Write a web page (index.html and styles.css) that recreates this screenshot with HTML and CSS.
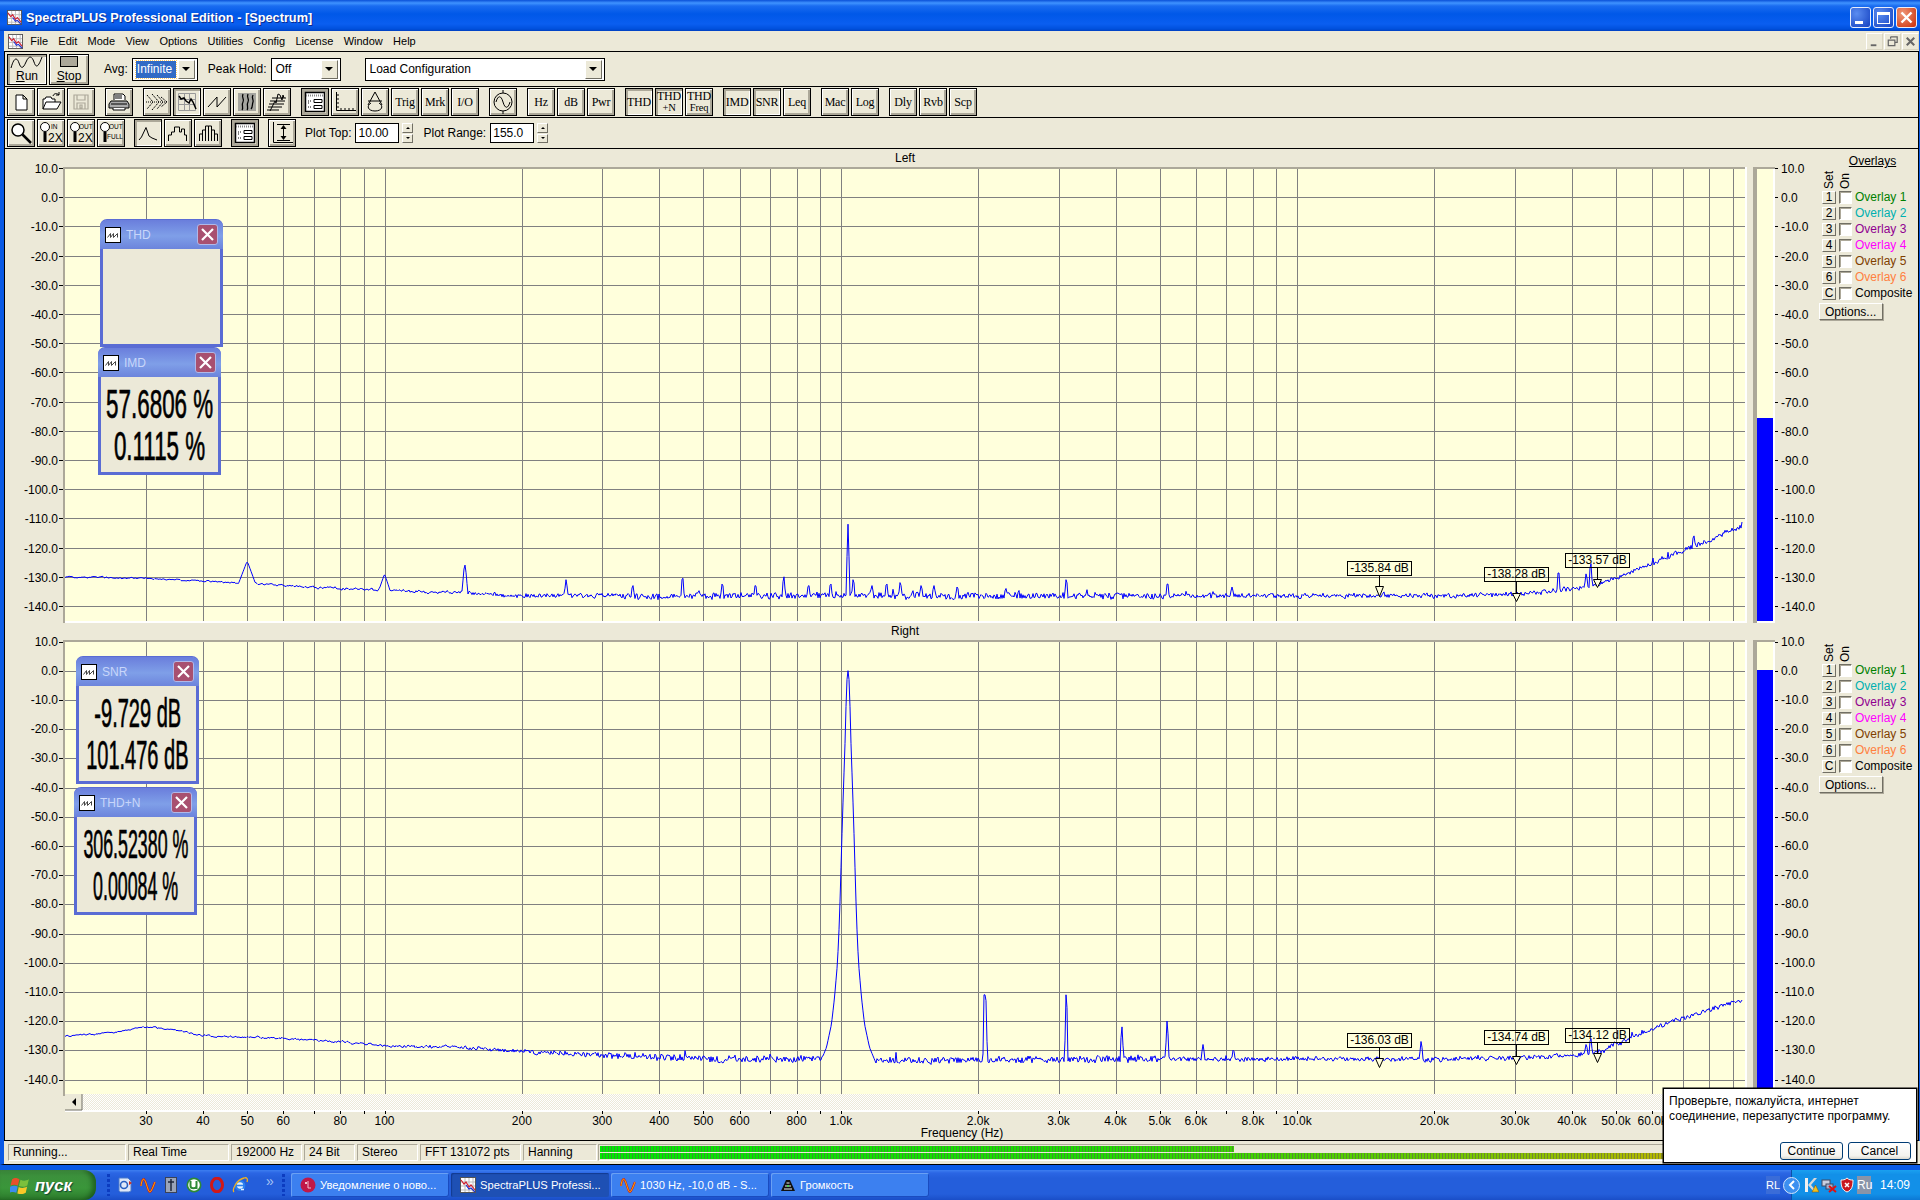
FILE: index.html
```html
<!DOCTYPE html>
<html lang="ru">
<head>
<meta charset="utf-8">
<title>SpectraPLUS Professional Edition - [Spectrum]</title>
<link rel="stylesheet" href="styles.css">
</head>
<body>
<div class="app">
  <div class="window">
    <header class="titlebar">
      <svg class="app-icon" viewBox="0 0 16 16"><rect x=".5" y=".5" width="15" height="15" fill="#fff" stroke="#555"/><path d="M1 5h14M1 9h14M1 13h14M5 1v14M9 1v14M13 1v14" stroke="#bbb"/><path d="M1 3l3 4 2-2 3 5 2-2 4 5" fill="none" stroke="#d02030" stroke-width="1.2"/><path d="M6 8l3 4 2-1 4 4" fill="none" stroke="#2030d0" stroke-width="1.2"/></svg>
      <span class="title-text">SpectraPLUS Professional Edition - [Spectrum]</span>
      <div class="caption-btns">
        <span class="cap cap-min"><i class="cap-min-bar"></i></span>
        <span class="cap cap-max"><i class="cap-max-box"></i></span>
        <span class="cap cap-close"><svg viewBox="0 0 13 13" class="cap-x"><path d="M1.5 1.5l10 10M11.5 1.5l-10 10" stroke="#fff" stroke-width="2.4"/></svg></span>
      </div>
    </header>

    <nav class="menubar">
      <svg class="menu-icon" viewBox="0 0 16 16"><rect x=".5" y=".5" width="15" height="15" fill="#fff" stroke="#555"/><path d="M1 5h14M1 9h14M1 13h14M5 1v14M9 1v14M13 1v14" stroke="#bbb"/><path d="M1 3l3 4 2-2 3 5 2-2 4 5" fill="none" stroke="#d02030" stroke-width="1.2"/><path d="M6 8l3 4 2-1 4 4" fill="none" stroke="#2030d0" stroke-width="1.2"/></svg>
      <span>File</span><span>Edit</span><span>Mode</span><span>View</span><span>Options</span><span>Utilities</span><span>Config</span><span>License</span><span>Window</span><span>Help</span>
      <div class="mdi-btns">
        <span class="mdi"><svg viewBox="0 0 16 16"><path d="M4 11h6v2H4z" fill="#666"/></svg></span>
        <span class="mdi"><svg viewBox="0 0 16 16"><path d="M6 3h7v6h-2M6 3v2M3.500 6.500h7v6h-7z" fill="none" stroke="#666" stroke-width="1.300"/></svg></span>
        <span class="mdi"><svg viewBox="0 0 16 16"><path d="M4 4l8 8M12 4l-8 8" stroke="#666" stroke-width="2.200"/></svg></span>
      </div>
    </nav>

    <div class="toolbars">
      <div class="toolbar toolbar-main">
        <button class="big-btn big-on">
          <svg class="big-ic" viewBox="0 0 34 14"><path d="M1 12C4 1 7 1 9 7s4 6 7-1 6-6 8 0 4 6 8-5" fill="none" stroke="#000"/></svg>
          <span class="big-label"><u>R</u>un</span>
        </button>
        <button class="big-btn">
          <i class="stop-sq"></i>
          <span class="big-label"><u>S</u>top</span>
        </button>
        <label class="tool-label lbl-avg">Avg:</label>
        <div class="combo combo-avg"><span class="combo-val combo-sel">Infinite</span><span class="combo-arrow"><i class="tri-down"></i></span></div>
        <label class="tool-label lbl-peak">Peak Hold:</label>
        <div class="combo combo-peak"><span class="combo-val">Off</span><span class="combo-arrow"><i class="tri-down"></i></span></div>
        <div class="combo combo-load"><span class="combo-val">Load Configuration</span><span class="combo-arrow"><i class="tri-down"></i></span></div>
      </div>

      <div class="toolbar">
        <button class="tb"><svg class="ic" viewBox="0 0 26 26"><path d="M8 6h7l4 4v11H8zM15 6v4h4" fill="#fff" stroke="#000"/></svg></button>
        <button class="tb"><svg class="ic" viewBox="0 0 26 26"><path d="M5 20V10h2l1-2h5l1 2h3v3M5 20l3-7h15l-4 7z" fill="#fff" stroke="#000"/><path d="M15 7c1-3 4-3 6-1M21 3v3h-3" fill="none" stroke="#000"/></svg></button>
        <button class="tb"><svg class="ic" viewBox="0 0 26 26"><path d="M6 6h14v14H6zM9 6v5h8V6M9 20v-6h8v6M12 16h2v3h-2z" fill="none" stroke="#aca899" stroke-width="1.200"/></svg></button>
        <button class="tb sep"><svg class="ic" viewBox="0 0 26 26"><path d="M8 11V5h9l2 2v4" fill="#fff" stroke="#000"/><path d="M5 12h16l2 3v4H3v-4z" fill="#aaa" stroke="#000"/><path d="M7 19v2h12v-2M5 15h16" stroke="#000" fill="#fff"/><path d="M9 7h7M9 9h7" stroke="#000"/></svg></button>
        <button class="tb sep"><svg class="ic" viewBox="0 0 26 26"><path d="M2 13h22" stroke="#000" stroke-dasharray="1 1"/><path d="M3 6l6 7-6 7M8 5l7 8-7 8M13 6l6 7-6 7M17 8l6 5-6 5" fill="none" stroke="#000" stroke-dasharray="1.500 .7"/></svg></button>
        <button class="tb tb-on"><svg class="ic" viewBox="0 0 26 26"><path d="M4.500 4.500h17v17h-17zM10.500 5v16M15.500 5v16M5 10.500h16M5 15.500h16" fill="none" stroke="#999"/><path d="M5 7l2 3 3-1 2 3 3 2 2-4 2 3 3 7" fill="none" stroke="#000" stroke-width="1.500"/></svg></button>
        <button class="tb"><svg class="ic" viewBox="0 0 26 26"><path d="M4 18L13 8v10l9-10" fill="none" stroke="#000"/></svg></button>
        <button class="tb tb-dither"><svg class="ic" viewBox="0 0 26 26"><path d="M4 4h18v18H4z" fill="#a6a6a0"/><path d="M9 5c-2 4 2 5 0 8s1 6-1 8M14 5c-2 4 2 5 0 8s1 6-1 8M19 6c-2 3 1 5 0 7s0 5-2 7" fill="none" stroke="#000" stroke-width="1.300"/></svg></button>
        <button class="tb"><svg class="ic" viewBox="0 0 26 26"><path d="M3 21h12M4 18h14M5 15h15M6 12h15M8 9h14" stroke="#000"/><path d="M6 22l3-6 2-4 1 2 2-9 2 1 2 5 1-5 1 3" fill="none" stroke="#000"/></svg></button>
        <button class="tb tb-on-dark sep"><svg class="ic" viewBox="0 0 26 26"><rect x="3.500" y="3.500" width="19" height="19" fill="#fff" stroke="#000" stroke-width="1.500"/><path d="M4 6.500h18" stroke="#888" stroke-width="2" stroke-dasharray="1 1"/><path d="M12 10.500h8v3h-8zM12 16.500h8v3h-8z" fill="#fff" stroke="#000"/><path d="M6 14h2M6 18h4M6 12h4" stroke="#000" stroke-dasharray="1 1"/></svg></button>
        <button class="tb"><svg class="ic" viewBox="0 0 26 26"><path d="M4.500 3v18.500H24" fill="none" stroke="#000"/><path d="M5 6h2M5 10h2M5 14h2M5 18h2M9 19v2M13 19v2M17 19v2M21 19v2" stroke="#000"/></svg></button>
        <button class="tb"><svg class="ic" viewBox="0 0 26 26"><path d="M13 3L6 16M13 3l7 13M6 12h14" fill="none" stroke="#000"/><path d="M9 14c-5 3-3 8 4 8s9-5 4-8" fill="none" stroke="#000"/></svg></button>
        <button class="tb tb-txt"><span>Trig</span></button>
        <button class="tb tb-txt"><span>Mrk</span></button>
        <button class="tb tb-txt"><span>I/O</span></button>
        <button class="tb sep"><svg class="ic" viewBox="0 0 26 26"><circle cx="13" cy="13" r="9" fill="none" stroke="#000"/><path d="M13 1v3M13 22v3" stroke="#000"/><path d="M6 13c2-7 5-7 7 0s5 7 7 0" fill="none" stroke="#000"/></svg></button>
        <button class="tb tb-txt sep"><span>Hz</span></button>
        <button class="tb tb-txt"><span>dB</span></button>
        <button class="tb tb-txt"><span>Pwr</span></button>
        <button class="tb tb-txt tb-on sep"><span>THD</span></button>
        <button class="tb tb-txt tb-on tb-two"><span>THD</span><span class="tb-sub">+N</span></button>
        <button class="tb tb-txt tb-two"><span>THD</span><span class="tb-sub">Freq</span></button>
        <button class="tb tb-txt tb-on sep"><span>IMD</span></button>
        <button class="tb tb-txt tb-on"><span>SNR</span></button>
        <button class="tb tb-txt"><span>Leq</span></button>
        <button class="tb tb-txt sep"><span>Mac</span></button>
        <button class="tb tb-txt"><span>Log</span></button>
        <button class="tb tb-txt sep"><span>Dly</span></button>
        <button class="tb tb-txt"><span>Rvb</span></button>
        <button class="tb tb-txt"><span>Scp</span></button>
      </div>

      <div class="toolbar">
        <button class="tb"><svg class="ic" viewBox="0 0 26 26"><circle cx="10" cy="10" r="6" fill="#fff" stroke="#000" stroke-width="1.500"/><path d="M14.500 14.500L23 23" stroke="#000" stroke-width="2.500"/></svg></button>
        <button class="tb"><svg class="ic" viewBox="0 0 26 26"><circle cx="7" cy="7" r="4.500" fill="#fff" stroke="#000"/><path d="M7 12v10" stroke="#000" stroke-width="3"/><text x="13" y="9" class="ic-small">IN</text><text x="10" y="22" class="ic-big">2X</text></svg></button>
        <button class="tb"><svg class="ic" viewBox="0 0 26 26"><circle cx="7" cy="7" r="4.500" fill="#fff" stroke="#000"/><path d="M7 12v10" stroke="#000" stroke-width="3"/><text x="11" y="9" class="ic-small">OUT</text><text x="10" y="22" class="ic-big">2X</text></svg></button>
        <button class="tb"><svg class="ic" viewBox="0 0 26 26"><circle cx="7" cy="7" r="4.500" fill="#fff" stroke="#000"/><path d="M7 12v10" stroke="#000" stroke-width="3"/><text x="11" y="9" class="ic-small">OUT</text><text x="9" y="19" class="ic-small">FULL</text></svg></button>
        <button class="tb tb-on sep-s"><svg class="ic" viewBox="0 0 26 26"><path d="M4 20l2.500-3L11 7.500 14 16l3 2 5 2" fill="none" stroke="#000"/></svg></button>
        <button class="tb"><svg class="ic" viewBox="0 0 26 26"><path d="M3.500 21v-6h3v-3h3V7h5v5h2v-3h3v6h2v6" fill="none" stroke="#000"/></svg></button>
        <button class="tb"><svg class="ic" viewBox="0 0 26 26"><path d="M4.500 21v-7h3v7M7.500 21V10h3v11M10.500 21V6h3v15M13.500 21V6h3v15M16.500 21V10h3v11M19.500 21v-7h3v7" fill="none" stroke="#000"/></svg></button>
        <button class="tb tb-on-dark sep-s"><svg class="ic" viewBox="0 0 26 26"><rect x="3.500" y="3.500" width="19" height="19" fill="#fff" stroke="#000" stroke-width="1.500"/><path d="M4 6.500h18" stroke="#888" stroke-width="2" stroke-dasharray="1 1"/><path d="M12 10.500h8v3h-8zM12 16.500h8v3h-8z" fill="#fff" stroke="#000"/><path d="M6 14h2M6 18h4M6 12h4" stroke="#000" stroke-dasharray="1 1"/></svg></button>
        <button class="tb sep-s"><svg class="ic" viewBox="0 0 26 26"><path d="M4.500 2v20.500H24M8 4.500h13M8 20.500h13M14.500 6v13" fill="none" stroke="#000"/><path d="M14.500 5l-3 4h6zM14.500 20l-3-4h6z" fill="#000"/></svg></button>
        <label class="tool-label lbl-top">Plot Top:</label>
        <div class="num-input">10.00</div>
        <div class="spin"><span class="spin-btn"><i class="tri-up"></i></span><span class="spin-btn"><i class="tri-down-s"></i></span></div>
        <label class="tool-label lbl-range">Plot Range:</label>
        <div class="num-input">155.0</div>
        <div class="spin"><span class="spin-btn"><i class="tri-up"></i></span><span class="spin-btn"><i class="tri-down-s"></i></span></div>
      </div>
    </div>

    <main class="client">
      <section class="pane pane-left">
        <div class="pane-main">
          <div class="pane-title pane-title-l">Left</div>
          <svg id="plot-left" class="plot plot-l" viewBox="5 167 1810 457"></svg>
        </div>
        <aside class="overlays ov-left">
          <div class="ov-title">Overlays</div>
          <div class="ov-head"><span class="rot">Set</span><span class="rot">On</span></div>
          <div class="ov-row"><button class="ov-set">1</button><i class="ov-check"></i><span class="c1">Overlay 1</span></div>
          <div class="ov-row"><button class="ov-set">2</button><i class="ov-check"></i><span class="c2">Overlay 2</span></div>
          <div class="ov-row"><button class="ov-set">3</button><i class="ov-check"></i><span class="c3">Overlay 3</span></div>
          <div class="ov-row"><button class="ov-set">4</button><i class="ov-check"></i><span class="c4">Overlay 4</span></div>
          <div class="ov-row"><button class="ov-set">5</button><i class="ov-check"></i><span class="c5">Overlay 5</span></div>
          <div class="ov-row"><button class="ov-set">6</button><i class="ov-check"></i><span class="c6">Overlay 6</span></div>
          <div class="ov-row"><button class="ov-set">C</button><i class="ov-check"></i><span>Composite</span></div>
          <button class="ov-options">Options...</button>
        </aside>
      </section>

      <section class="pane pane-right">
        <div class="pane-main">
          <div class="pane-title pane-title-r">Right</div>
          <svg id="plot-right" class="plot plot-r" viewBox="5 640 1810 500"></svg>
        </div>
        <aside class="overlays ov-right">
          <div class="ov-head"><span class="rot">Set</span><span class="rot">On</span></div>
          <div class="ov-row"><button class="ov-set">1</button><i class="ov-check"></i><span class="c1">Overlay 1</span></div>
          <div class="ov-row"><button class="ov-set">2</button><i class="ov-check"></i><span class="c2">Overlay 2</span></div>
          <div class="ov-row"><button class="ov-set">3</button><i class="ov-check"></i><span class="c3">Overlay 3</span></div>
          <div class="ov-row"><button class="ov-set">4</button><i class="ov-check"></i><span class="c4">Overlay 4</span></div>
          <div class="ov-row"><button class="ov-set">5</button><i class="ov-check"></i><span class="c5">Overlay 5</span></div>
          <div class="ov-row"><button class="ov-set">6</button><i class="ov-check"></i><span class="c6">Overlay 6</span></div>
          <div class="ov-row"><button class="ov-set">C</button><i class="ov-check"></i><span>Composite</span></div>
          <button class="ov-options">Options...</button>
        </aside>
      </section>

      <div class="float f-thd">
        <div class="float-title"><svg class="float-ic" viewBox="0 0 16 16"><rect x=".5" y=".5" width="15" height="15" fill="#fff" stroke="#000"/><path d="M2.500 10.500l3-4v4l3-4v4l4-4v4" fill="none" stroke="#444"/></svg><span>THD</span><span class="float-x"><svg viewBox="0 0 13 13"><path d="M1 1l11 11M12 1L1 12" stroke="#fff" stroke-width="2.200"/></svg></span></div>
        <div class="float-body"></div>
      </div>
      <div class="float f-imd">
        <div class="float-title"><svg class="float-ic" viewBox="0 0 16 16"><rect x=".5" y=".5" width="15" height="15" fill="#fff" stroke="#000"/><path d="M2.500 10.500l3-4v4l3-4v4l4-4v4" fill="none" stroke="#444"/></svg><span>IMD</span><span class="float-x"><svg viewBox="0 0 13 13"><path d="M1 1l11 11M12 1L1 12" stroke="#fff" stroke-width="2.200"/></svg></span></div>
        <div class="float-body"><span class="val sx-imd">57.6806 %</span><span class="val sx-imd">0.1115 %</span></div>
      </div>
      <div class="float f-snr">
        <div class="float-title"><svg class="float-ic" viewBox="0 0 16 16"><rect x=".5" y=".5" width="15" height="15" fill="#fff" stroke="#000"/><path d="M2.500 10.500l3-4v4l3-4v4l4-4v4" fill="none" stroke="#444"/></svg><span>SNR</span><span class="float-x"><svg viewBox="0 0 13 13"><path d="M1 1l11 11M12 1L1 12" stroke="#fff" stroke-width="2.200"/></svg></span></div>
        <div class="float-body"><span class="val sx-snr">-9.729 dB</span><span class="val sx-snr">101.476 dB</span></div>
      </div>
      <div class="float f-thdn">
        <div class="float-title"><svg class="float-ic" viewBox="0 0 16 16"><rect x=".5" y=".5" width="15" height="15" fill="#fff" stroke="#000"/><path d="M2.500 10.500l3-4v4l3-4v4l4-4v4" fill="none" stroke="#444"/></svg><span>THD+N</span><span class="float-x"><svg viewBox="0 0 13 13"><path d="M1 1l11 11M12 1L1 12" stroke="#fff" stroke-width="2.200"/></svg></span></div>
        <div class="float-body"><span class="val sx-thdn">306.52380 %</span><span class="val sx-thdn">0.00084 %</span></div>
      </div>
    </main>

    <footer class="statusbar">
      <span class="cell w-run">Running...</span>
      <span class="cell w-real">Real Time</span>
      <span class="cell w-hz">192000 Hz</span>
      <span class="cell w-bit">24 Bit</span>
      <span class="cell w-ste">Stereo</span>
      <span class="cell w-fft">FFT 131072 pts</span>
      <span class="cell w-han">Hanning</span>
      <div class="cell level">
        <div class="level-bar" style="width:634px"></div>
        <div class="level-bar" style="width:1200px"></div>
      </div>
    </footer>
  </div>

  <div class="taskbar">
    <button class="start">
      <svg class="flag" viewBox="0 0 20 20"><path d="M2 4c3-2 5-1 7 0l-1.500 6C5 9 3 9 .5 10z" fill="#e8502a"/><path d="M10 4.500c2 1 5 1.500 8-.5l-1.500 6c-3 2-6 1-8 .5z" fill="#7cc03c"/><path d="M.3 11c3-1 5-1 7 0L6 17c-2-1-4-1-7 0z" fill="#3c8cf0"/><path d="M8.300 11.500c2 1 5 1.500 8-.5L15 17c-3 2-6 1-8 .5z" fill="#f8c828"/></svg>
      <span>пуск</span>
    </button>
    <i class="grip grip-a"></i>
    <div class="quick">
      <svg class="tk-ic" viewBox="0 0 16 16"><path d="M2 1h9l3 3v10l-2 1H3l-1-1z" fill="#dfe8f8" stroke="#4a78c8"/><circle cx="7" cy="8" r="3.500" fill="none" stroke="#2860c0" stroke-width="1.600"/><path d="M12 4l3 2-3 2z" fill="#d03020"/></svg>
      <svg class="tk-ic" viewBox="0 0 16 16"><path d="M1 9C2 1 4 0 6 6s3 11 5 8 3-7 4-9" fill="none" stroke="#d01010" stroke-width="2"/><path d="M1 9C2 1 4 0 6 6s3 11 5 8 3-7 4-9" fill="none" stroke="#ffe000" stroke-width=".8"/></svg>
      <svg class="tk-ic" viewBox="0 0 16 16"><rect x="2.500" y=".5" width="11" height="15" fill="#9aa4b8" stroke="#3a4258"/><path d="M8 2v12M5 5h6" stroke="#20283c" stroke-width="1.500"/></svg>
      <svg class="tk-ic" viewBox="0 0 16 16"><circle cx="8" cy="8" r="7.500" fill="#2e8a36"/><circle cx="8" cy="8" r="5.800" fill="#fff"/><path d="M4.500 4v5c0 3 6 3 6 0V4M10.500 4v8" fill="none" stroke="#2e8a36" stroke-width="2"/></svg>
      <svg class="tk-ic" viewBox="0 0 16 16"><ellipse cx="8" cy="8" rx="5.500" ry="6.800" fill="none" stroke="#d01818" stroke-width="3"/></svg>
      <svg class="tk-ic" viewBox="0 0 16 16"><circle cx="8" cy="8.500" r="4.300" fill="#e4f2ff" stroke="#2a80f0" stroke-width="2.200"/><path d="M4 8.500h8" stroke="#2a80f0" stroke-width="1.600"/><path d="M12 12.500h-3" stroke="#e4f2ff" stroke-width="1.500"/><path d="M2 15C0 13 4 3 12 1c3-1 4 1 3 4" fill="none" stroke="#f0b020" stroke-width="1.300"/></svg>
    </div>
    <span class="chev">»</span>
    <i class="grip grip-b"></i>
    <div class="task"><svg class="tk-ic" viewBox="0 0 16 16"><circle cx="8" cy="8" r="7.500" fill="#c01848"/><circle cx="6" cy="6" r="1" fill="#fff"/><path d="M8 4v7h3" stroke="#f0c0d0" fill="none"/></svg><span>Уведомление о ново...</span></div>
    <div class="task task-active"><svg class="tk-ic" viewBox="0 0 16 16"><rect x=".5" y=".5" width="15" height="15" fill="#fff" stroke="#555"/><path d="M1 5h14M1 9h14M1 13h14M5 1v14M9 1v14M13 1v14" stroke="#bbb"/><path d="M1 3l3 4 2-2 3 5 2-2 4 5" fill="none" stroke="#d02030" stroke-width="1.200"/><path d="M6 8l3 4 2-1 4 4" fill="none" stroke="#2030d0" stroke-width="1.200"/></svg><span>SpectraPLUS Professi...</span></div>
    <div class="task"><svg class="tk-ic" viewBox="0 0 16 16"><path d="M1 9C2 1 4 0 6 6s3 11 5 8 3-7 4-9" fill="none" stroke="#d01010" stroke-width="2"/><path d="M1 9C2 1 4 0 6 6s3 11 5 8 3-7 4-9" fill="none" stroke="#ffe000" stroke-width=".8"/></svg><span>1030 Hz, -10,0 dB - S...</span></div>
    <div class="task"><svg class="tk-ic" viewBox="0 0 16 16"><path d="M1 14L6 3h4l5 11z" fill="#111"/><path d="M4 12h8M5 9h6M6.500 6h3" stroke="#f0f0f0"/><rect x="7" y="8" width="2" height="2" fill="#50d050"/></svg><span>Громкость</span></div>
    <div class="tray-wrap">
      <span class="lang-rl">RL</span>
      <span class="tray-chev"><svg viewBox="0 0 10 10"><path d="M7 1L3 5l4 4" fill="none" stroke="#fff" stroke-width="2"/></svg></span>
      <div class="tray">
        <svg class="tk-ic" viewBox="0 0 16 16"><path d="M2 1v14h3V1z" fill="#f0f0f0"/><path d="M5 8l6-7h3L8 8l6 7h-3z" fill="#d8d8d8"/><path d="M9 15l3.500-7 3.500 7z" fill="#f0c020" stroke="#805000" stroke-width=".5"/></svg>
        <svg class="tk-ic" viewBox="0 0 16 16"><rect x="1" y="3" width="8" height="6" fill="#c8d0e0" stroke="#404860"/><rect x="5" y="7" width="7" height="5" fill="#a0b0d0" stroke="#404860"/><path d="M8 9l7 6M15 9l-7 6" stroke="#e01010" stroke-width="2"/></svg>
        <svg class="tk-ic" viewBox="0 0 16 16"><path d="M8 1c2 2 4 2 6 2 0 6-1 10-6 12C3 13 2 9 2 3c2 0 4 0 6-2z" fill="#c81820" stroke="#f4f4f4"/><path d="M6 6l4 4M10 6l-4 4" stroke="#fff" stroke-width="1.500"/></svg>
        <span class="lang-ru">Ru</span>
        <span class="clock">14:09</span>
      </div>
    </div>
  </div>

  <div class="notice">
    <p>Проверьте, пожалуйста, интернет<br>соединение, перезапустите программу.</p>
    <div class="notice-btns"><button class="xp-btn">Continue</button><button class="xp-btn">Cancel</button></div>
  </div>
</div>
<script src="chart.js"></script>
</body>
</html>
```
FILE: styles.css
```css
* { box-sizing: border-box; }
html, body { margin: 0; padding: 0; width: 1920px; height: 1200px; overflow: hidden; }
body { font: 12px "Liberation Sans", Arial, sans-serif; color: #000; background: #245edb; }
button { font: inherit; color: inherit; margin: 0; padding: 0; }
.app { position: relative; width: 1920px; height: 1200px; display: flex; flex-direction: column; }

.window { height: 1170px; display: flex; flex-direction: column; padding: 0 1px 4px 4px; background: #0a5ae6; }
.titlebar { height: 31px; margin: 0 -1px 0 -4px; padding: 4px 0 0 7px; display: flex; align-items: center; color: #fff;
  background: linear-gradient(180deg, #0a50d8 0, #3f93ff 3px, #1a6cf0 6px, #0058e8 14px, #0a5ef0 24px, #0050dc 29px, #0040c0 31px); }
.app-icon { width: 15px; height: 15px; margin-right: 4px; }
.title-text { font-weight: bold; font-size: 12.750px; text-shadow: 1px 1px 0 #0a2a90; }
.caption-btns { margin-left: auto; margin-right: 3px; display: flex; gap: 2px; }
.cap { width: 21px; height: 21px; border: 1px solid #e8eefc; border-radius: 3px; display: flex; background: radial-gradient(circle at 30% 30%, #5a8cf0, #1e4cc8 85%); position: relative; }
.cap-min-bar { width: 8px; height: 3px; background: #fff; margin: auto 0 3px 4px; }
.cap-max-box { width: 13px; height: 12px; border: 1px solid #fff; border-top-width: 3px; margin: auto; }
.cap-close { background: radial-gradient(circle at 30% 30%, #f09878, #d03c18 85%); }
.cap-x { width: 13px; height: 13px; margin: auto; }

.menubar { height: 20px; display: flex; align-items: center; gap: 10.300px; background: #ece9d8; font-size: 11px; padding-left: 4px; }
.menu-icon { width: 15px; height: 15px; margin-right: -3px; }
.mdi-btns { margin-left: auto; display: flex; gap: 1px; }
.mdi { width: 17px; height: 17px; background: #ece9d8; border: 1px solid #fff; border-right-color: #d8d4c0; border-bottom-color: #d8d4c0; display: flex; }
.mdi svg { width: 15px; height: 15px; }

.toolbars { display: flex; flex-direction: column; background: #ece9d8; border-left: 1px solid #000; border-right: 1px solid #000; }
.toolbar { height: 31px; border-top: 1px solid #000; display: flex; align-items: center; padding-left: 2px; gap: 2px; }
.toolbar-main { height: 35px; }
.tool-label { font-size: 12px; white-space: nowrap; }
.lbl-avg { margin-left: 13px; margin-right: 2px; }
.lbl-peak { margin-left: 8px; margin-right: 2px; }
.lbl-top { margin-left: 7px; }
.lbl-range { margin-left: 8px; }

.big-btn { width: 40px; height: 31px; border: 1px solid #000; background: #ece9d8; box-shadow: inset 1px 1px 0 #fff, inset -2px -2px 0 #aca899; display: flex; flex-direction: column; align-items: center; justify-content: flex-end; padding-bottom: 1px; font-size: 12px; line-height: 13px; }
.big-on { box-shadow: inset 2px 2px 0 #aca899, inset -1px -1px 0 #fff; }
.big-ic { width: 34px; height: 14px; }
.stop-sq { width: 18px; height: 11px; background: #aca899; border: 1px solid #000; margin-bottom: 3px; }
.combo { height: 23px; background: #fff; border: 1px solid #000; display: flex; align-items: center; padding: 0 2px 0 3px; font-size: 12px; }
.combo-avg { width: 66px; }
.combo-peak { width: 70px; }
.combo-load { width: 240px; margin-left: 22px; }
.combo-val { flex: 1; padding-left: 1px; }
.combo-sel { background: #316ac5; color: #fff; outline: 1px dotted #fc6; height: 17px; line-height: 17px; margin-right: 2px; }
.combo-arrow { width: 17px; height: 19px; background: #ece9d8; border: 1px solid #fff; border-right-color: #716f64; border-bottom-color: #716f64; display: flex; }
.tri-down { margin: auto; width: 0; height: 0; border: 4px solid transparent; border-top-color: #000; border-bottom-width: 0; }

.tb { width: 28px; height: 28px; flex: none; border: 1px solid #000; background: #ece9d8; box-shadow: inset 1px 1px 0 #fff, inset -2px -2px 0 #aca899; display: flex; flex-direction: column; align-items: center; justify-content: center; }
.tb-on { box-shadow: inset 2px 2px 0 #aca899, inset -1px -1px 0 #fff; }
.tb-on-dark { box-shadow: inset 3px 3px 0 #aca899, inset -2px -2px 0 #aca899; }
.sep { margin-left: 8px; }
.sep-s { margin-left: 7px; }
.ic { width: 26px; height: 26px; display: block; }
.ic-small { font: 6.500px "Liberation Sans", Arial, sans-serif; }
.ic-big { font: 12px "Liberation Sans", Arial, sans-serif; }
.tb-txt { font: 12px "Liberation Serif", "Times New Roman", serif; letter-spacing: -.2px; }
.tb-two { line-height: 11px; }
.tb-sub { font-size: 10.500px; }
.num-input { width: 44px; height: 20px; background: #fff; border: 1px solid #000; font-size: 12px; line-height: 18px; padding-left: 2px; margin-left: 2px; }
.spin { width: 11px; display: flex; flex-direction: column; gap: 1px; height: 20px; margin-left: 1px; }
.spin-btn { flex: 1; background: #ece9d8; border: 1px solid #fff; border-right-color: #716f64; border-bottom-color: #716f64; display: flex; }
.tri-up { margin: auto; width: 0; height: 0; border: 2px solid transparent; border-bottom-color: #000; border-top-width: 0; }
.tri-down-s { margin: auto; width: 0; height: 0; border: 2px solid transparent; border-top-color: #000; border-bottom-width: 0; }

.client { position: relative; height: 993px; background: #ece9d8; border: 1px solid #000; border-bottom-width: 1px; display: flex; flex-direction: column; overflow: hidden; }
.pane { display: flex; }
.pane-main { width: 1810px; flex: none; }
.pane-title { text-align: center; padding-right: 10px; font-size: 12px; }
.pane-title-l { height: 18px; line-height: 19px; }
.pane-title-r { height: 16px; line-height: 15px; }
.plot { display: block; width: 1810px; overflow: visible; font-family: "Liberation Sans", Arial, sans-serif; font-size: 12px; }
.plot-l { height: 457px; }
.plot-r { height: 500px; }

.overlays { flex: 1; padding-left: 7px; display: flex; flex-direction: column; font-size: 12px; }
.ov-left { padding-top: 5px; }
.ov-right { padding-top: 18px; }
.ov-title { text-decoration: underline; width: 100px; text-align: center; margin-left: 0; height: 15px; line-height: 14px; padding-left: 1px; }
.ov-head { height: 20px; display: flex; gap: 2px; }
.rot { writing-mode: vertical-rl; transform: rotate(180deg); width: 14px; line-height: 14px; text-align: left; }
.ov-row { height: 16px; display: flex; align-items: center; gap: 3px; white-space: nowrap; }
.ov-set { width: 14px; height: 13px; flex: none; border: 1px solid #fff; border-right-color: #716f64; border-bottom-color: #716f64; background: #ece9d8; font-size: 12px; line-height: 11px; }
.ov-check { width: 13px; height: 13px; flex: none; background: #fff; border: 1px solid #716f64; border-right-color: #fff; border-bottom-color: #fff; box-shadow: inset 1px 1px 0 #aca899; }
.c1 { color: #008000; } .c2 { color: #00b0b0; } .c3 { color: #900090; } .c4 { color: #ff00ff; } .c5 { color: #804000; } .c6 { color: #ff8040; }
.ov-options { width: 64px; height: 17px; margin: 2px 0 0 -3px; background: #ece9d8; border: 1px solid #fff; border-right-color: #716f64; border-bottom-color: #716f64; box-shadow: 1px 1px 0 #aca899; font-size: 12px; line-height: 14px; text-align: left; padding-left: 5px; }

.float { position: absolute; width: 123px; height: 128px; display: flex; flex-direction: column; border: 3px solid #5a6cd4; border-top-width: 1px; border-radius: 7px 7px 0 0; background: #ece9d8; }
.f-thd { left: 95px; top: 70px; }
.f-imd { left: 93px; top: 198px; }
.f-snr { left: 71px; top: 507px; }
.f-thdn { left: 69px; top: 638px; }
.float-title { height: 29px; flex: none; margin: 0 -3px; padding: 0 5px; display: flex; align-items: center; gap: 5px; color: #c8d6fa; font-size: 12px; background: linear-gradient(180deg, #6a7edc, #7f9fe8 55%, #6c84dc); border-radius: 6px 6px 0 0; }
.float-ic { width: 16px; height: 16px; flex: none; }
.float-x { margin-left: auto; width: 21px; height: 21px; border: 1px solid #b0b8e8; border-radius: 3px; background: #a85070; display: flex; }
.float-x svg { width: 13px; height: 13px; margin: auto; }
.float-body { flex: 1; display: flex; flex-direction: column; align-items: center; justify-content: center; overflow: hidden; }
.val { display: block; font-size: 40px; line-height: 42px; white-space: nowrap; transform-origin: center; flex: none; -webkit-text-stroke: .7px #000; }
.sx-imd { transform: scaleX(.56); }
.sx-snr { transform: scaleX(.5); }
.sx-thdn { transform: scaleX(.445); }

.statusbar { height: 24px; flex: none; margin: 0 -1px 0 -4px; padding: 3px 0 3px 4px; display: flex; gap: 2px; background: #ece9d8; border-bottom: 1px solid #000; font-size: 12px; border-left: 4px solid #0a5ae6; }
.cell { height: 17px; border: 1px solid #aca899; border-right-color: #fff; border-bottom-color: #fff; line-height: 15px; padding-left: 4px; white-space: nowrap; }
.w-run { width: 118px; } .w-real { width: 101px; } .w-hz { width: 71px; } .w-bit { width: 51px; } .w-ste { width: 61px; } .w-fft { width: 101px; } .w-han { width: 74px; }
.level { flex: 1; padding: 1px 0 0 1px; margin-right: 4px; margin-left: -1px; display: flex; flex-direction: column; gap: 1px; }
.level-bar { height: 6px; background: repeating-linear-gradient(90deg, rgba(0,0,0,0) 0 2px, rgba(90,90,90,.55) 2px 3px), linear-gradient(90deg, #00ea00 0, #20dc00 500px, #60cc00 800px, #c0b400 1100px, #d0a800 1320px); background-size: 3px 100%, 1320px 100%; background-repeat: repeat, no-repeat; }

.taskbar { height: 30px; flex: none; display: flex; align-items: center; color: #fff; background: linear-gradient(180deg, #3d7ef0 0, #2b66e4 3px, #245edb 8px, #245edb 24px, #1a4ec8 30px); }
.start { width: 96px; height: 30px; flex: none; display: flex; align-items: center; gap: 4px; padding-left: 10px; border: 0; border-radius: 0 12px 12px 0; color: #fff; background: linear-gradient(180deg, #4a9a4a 0, #3c8f3c 10%, #3a963a 60%, #2c7c2c 100%); box-shadow: inset -4px 0 5px rgba(0,40,0,.45); font: italic bold 16.500px "Liberation Sans", Arial, sans-serif; text-shadow: 1px 1px 1px #143; }
.flag { width: 21px; height: 21px; }
.grip { width: 3px; height: 22px; flex: none; background: repeating-linear-gradient(180deg, #0c3cc0 0 3px, transparent 3px 5px); }
.grip-a { margin-left: 11px; }
.quick { display: flex; gap: 7px; margin-left: 7px; }
.tk-ic { width: 16px; height: 16px; flex: none; display: block; }
.chev { margin-left: 18px; width: 13px; color: #a8c4f4; font-size: 14px; line-height: 14px; margin-top: -8px; }
.grip-b { margin-left: 3px; margin-right: 6px; }
.task { width: 158px; height: 24px; flex: none; margin-right: 2px; display: flex; align-items: center; gap: 4px; padding-left: 9px; border-radius: 2px; background: #3c80f0; box-shadow: inset 1px 1px 0 #6aa0f4, inset -1px -1px 0 #1a4cc0; font-size: 11.200px; white-space: nowrap; overflow: hidden; }
.task-active { background: #1e50b4; box-shadow: inset 1px 1px 1px #123a90; }
.tray-wrap { margin-left: auto; display: flex; align-items: center; height: 30px; }
.lang-rl { width: 14px; height: 18px; line-height: 18px; text-align: center; background: #3a6cd8; font-size: 11px; margin-right: 3px; }
.tray-chev { width: 17px; height: 17px; border-radius: 50%; background: #3c90f0; border: 1px solid #d4e4fc; display: flex; margin-right: -9px; position: relative; }
.tray-chev svg { width: 10px; height: 10px; margin: auto; }
.tray { width: 129px; height: 30px; display: flex; align-items: center; gap: 2px; padding-left: 11px; background: linear-gradient(180deg, #1aa0f0 0, #1290e8 15%, #1290e8 80%, #0c78d4 100%); border-left: 1px solid #0c50a8; }
.lang-ru { width: 14px; height: 18px; line-height: 18px; background: #8a94a8; text-align: center; font-size: 12px; }
.clock { margin-left: 7px; font-size: 12px; }

.notice { position: absolute; left: 1663px; top: 1088px; width: 254px; height: 75px; background: #fff; border: 1px solid #000; padding: 5px 5px 0 5px; box-shadow: 0 0 0 .5px #000; display: flex; flex-direction: column; }
.notice p { margin: 0; font-size: 12px; letter-spacing: .05px; line-height: 15px; white-space: nowrap; }
.notice-btns { margin-top: auto; margin-bottom: 2px; display: flex; justify-content: flex-end; gap: 5px; }
.xp-btn { width: 63px; height: 18px; border: 1px solid #003c74; border-radius: 3px; background: linear-gradient(180deg, #fff, #f4f3ee 80%, #dcd8ce); font-size: 12px; line-height: 14px; }
```
FILE: chart.js
```js
(function () {
  var X0 = 384.5, DEC = 456.3;
  function fx(f) { return X0 + DEC * Math.log10(f / 100); }
  function xf(x) { return 100 * Math.pow(10, (x - X0) / DEC); }
  var seed = 12345;
  function rnd() { seed = (seed * 1664525 + 1013904223) % 4294967296; return seed / 4294967296; }

  function interp(tab, f) {
    var lf = Math.log10(f);
    if (f <= tab[0][0]) return tab[0][1];
    for (var i = 1; i < tab.length; i++) {
      if (f <= tab[i][0]) {
        var a = Math.log10(tab[i - 1][0]), b = Math.log10(tab[i][0]);
        return tab[i - 1][1] + (tab[i][1] - tab[i - 1][1]) * (lf - a) / (b - a);
      }
    }
    return tab[tab.length - 1][1];
  }

  var GRID = [];
  [10, 100, 1000, 10000].forEach(function (d) {
    for (var k = 1; k < 10; k++) { var f = d * k; if (f >= 30 && f <= 90000) GRID.push(f); }
  });

  function trace(cfg) {
    var pts = [];
    var drift = 0;
    for (var x = 65; x <= 1742; x++) {
      var f = xf(x);
      var base = interp(cfg.floor, f);
      var amp = Math.min(1.3, Math.max(0.1, f / 260));
      if (f > 5000) amp = 0.9;
      drift = drift * 0.6 + (rnd() - 0.5) * 0.5;
      var v = base + drift + (rnd() - 0.5) * amp * 1.6;
      if (rnd() < 0.03 && f > 200) v += rnd() * 1.8 * amp;
      cfg.peaks.forEach(function (p) {
        var dx = Math.max(0, Math.abs(x - fx(p[0])) - 0.5);
        var w = p[2] || 1.1;
        if (dx < w) {
          var h = p[1] - (p[1] - base) * dx / w;
          if (h > v) v = h;
        }
      });
      if (cfg.skirt) {
        var d = Math.max(0, Math.abs(x - fx(cfg.skirt)) - 0.5);
        var S = [[0, 0], [1, -6], [2.5, -25], [5, -50], [8, -85], [10, -100], [13, -112], [16, -121], [21, -129], [27, -134]];
        for (var i = 1; i < S.length; i++) {
          if (d <= S[i][0]) {
            var val = S[i - 1][1] + (S[i][1] - S[i - 1][1]) * (d - S[i - 1][0]) / (S[i][0] - S[i - 1][0]);
            if (val > v) v = val;
            break;
          }
        }
      }
      pts.push(x + "," + (cfg.y0 + (10 - v) * 2.92).toFixed(1));
    }
    return pts.join(" ");
  }

  function marker(m) {
    var cx = m[1] + 32.5, s = "";
    s += '<rect x="' + (m[1] + .5) + '" y="' + (m[2] + .5) + '" width="64" height="14" fill="none" stroke="#000"/>';
    s += '<text x="' + cx + '" y="' + (m[2] + 11) + '" text-anchor="middle" font-size="12">' + m[0] + "</text>";
    var c = Math.floor(cx) + .5;
    s += '<path d="M' + c + " " + (m[2] + 14) + "V" + m[3] + '" stroke="#000"/>';
    s += '<path d="M' + (c - 4) + " " + (m[3] + .5) + "h8l-4 " + (m[4] - m[3]) + 'z" fill="#ffffdc" stroke="#000"/>';
    return s;
  }

  function plot(id, cfg) {
    var s = "", top = cfg.top, bot = cfg.bot;
    /* sunken plot frame */
    s += '<rect x="63" y="' + (top - 2) + '" width="1684" height="' + (bot - top + 4) + '" fill="#fff"/>';
    s += '<path d="M63 ' + (top - 2) + "H1745V" + top + "H65V" + (bot + 2) + 'H63z" fill="#aca899"/>';
    s += '<rect x="65" y="' + top + '" width="1680" height="' + (bot - top) + '" fill="#ffffdc"/>';
    /* grid */
    var g = "";
    GRID.forEach(function (f) { var x = Math.round(fx(f)) + .5; g += "M" + x + " " + top + "V" + bot; });
    for (var db = 0; db >= -140; db -= 10) {
      var y = Math.round(cfg.y0 + (10 - db) * 2.92) + .5;
      g += "M65 " + y + "H1745";
    }
    s += '<path d="' + g + '" stroke="#808080" fill="none" shape-rendering="crispEdges"/>';
    /* dB scale + ticks, on both sides */
    for (db = 10; db >= -140; db -= 10) {
      var yy = Math.round(cfg.y0 + (10 - db) * 2.92);
      var t = db.toFixed(1);
      s += '<path d="M59 ' + (yy + .5) + "h4M1775 " + (yy + .5) + 'h3" stroke="#000"/>';
      s += '<text x="58" y="' + (yy + cfg.ty) + '" text-anchor="end">' + t + "</text>";
      s += '<text x="1781" y="' + (yy + cfg.ty) + '">' + t + "</text>";
    }
    /* level meter */
    s += '<rect x="1753" y="' + (top - 2) + '" width="22" height="' + (bot - top + 4) + '" fill="#fff"/>';
    s += '<path d="M1753 ' + (top - 2) + "H1775V" + top + "H1757V" + (bot + 2) + 'H1753z" fill="#aca899"/>';
    s += '<rect x="1757" y="' + top + '" width="16" height="' + (bot - top) + '" fill="#ffffdc"/>';
    s += '<rect x="1757" y="' + cfg.meter + '" width="16" height="' + (bot - cfg.meter) + '" fill="#0000ff"/>';
    /* trace */
    s += '<polyline points="' + trace(cfg) + '" fill="none" stroke="#0000ff" stroke-width="1"/>';
    cfg.markers.forEach(function (m) { s += marker(m); });
    if (cfg.axis) {
      s += '<defs><pattern id="dith" width="2" height="2" patternUnits="userSpaceOnUse"><rect width="2" height="2" fill="#ece9d8"/><rect width="1" height="1" fill="#fff"/><rect x="1" y="1" width="1" height="1" fill="#fff"/></pattern></defs>';
      s += '<rect x="65" y="' + bot + '" width="1680" height="16" fill="url(#dith)"/>';
      s += '<rect x="65" y="' + (bot + 16) + '" width="1682" height="2" fill="#fff"/>';
      s += '<rect x="65" y="' + bot + '" width="17" height="16" fill="#ece9d8"/><path d="M65 ' + (bot + 16) + "H82V" + bot + '" fill="none" stroke="#716f64"/>';
      s += '<path d="M76 ' + (bot + 4) + "v8l-4-4z" + '" fill="#000"/>';
      var labels = [[30, "30"], [40, "40"], [50, "50"], [60, "60"], [80, "80"], [100, "100"], [200, "200"], [300, "300"], [400, "400"], [500, "500"], [600, "600"], [800, "800"], [1000, "1.0k"], [2000, "2.0k"], [3000, "3.0k"], [4000, "4.0k"], [5000, "5.0k"], [6000, "6.0k"], [8000, "8.0k"], [10000, "10.0k"], [20000, "20.0k"], [30000, "30.0k"], [40000, "40.0k"], [50000, "50.0k"], [60000, "60.0k"]];
      GRID.forEach(function (f) {
        var x = Math.round(fx(f)) + .5;
        s += '<path d="M' + x + " " + (bot + 17) + "v3" + '" stroke="#000"/>';
      });
      labels.forEach(function (l) {
        s += '<text x="' + fx(l[0]) + '" y="' + (bot + 31) + '" text-anchor="middle">' + l[1] + "</text>";
      });
      s += '<text x="962" y="1137" text-anchor="middle">Frequency (Hz)</text>';
    }
    document.getElementById(id).innerHTML = s;
  }

  plot("plot-left", {
    top: 169, bot: 621, y0: 168, ty: 5, meter: 418, axis: false,
    floor: [[20, -130], [30, -130.5], [40, -131.5], [60, -133], [80, -134], [100, -134.5], [150, -135.5], [200, -136.5], [5000, -136.5], [20000, -136.5], [30000, -136], [36000, -135], [42000, -134], [45000, -133], [50000, -130.5], [60000, -125.5], [70000, -121], [80000, -117.5], [90000, -114], [96000, -112.5]],
    peaks: [[50, -125, 8], [100, -129.5, 5], [150, -126, 2.5], [250, -131], [350, -133], [450, -130.5], [550, -132.5], [650, -133], [750, -130], [850, -133], [950, -132.5], [1037, -112, 1.1], [1065, -131], [1170, -133], [1260, -132.5], [1350, -132], [1500, -133], [1600, -133], [1800, -133.5], [2300, -134], [3120, -131], [5200, -132.5], [7200, -133.5], [37400, -128.7], [44000, -125.5], [43000, -129], [74000, -116]],
    markers: [["-135.84 dB", 1347, 561, 586, 596], ["-138.28 dB", 1484, 567, 593, 601], ["-133.57 dB", 1565, 553, 579, 587]]
  });

  plot("plot-right", {
    top: 642, bot: 1094, y0: 641.5, ty: 4, meter: 670, axis: true, skirt: 1037,
    floor: [[20, -125], [25, -124], [30, -122], [35, -123], [40, -125], [60, -126], [80, -127], [100, -128.5], [150, -129], [200, -130.5], [300, -131.5], [500, -133], [900, -133], [1200, -133.5], [5000, -133], [20000, -133], [35000, -132.5], [42000, -131.5], [47000, -130], [50000, -128], [60000, -122.5], [80000, -116], [96000, -112.5]],
    peaks: [[2065, -111], [2078, -113], [3120, -111], [4130, -122], [5190, -120], [6220, -128], [7250, -130], [18700, -127], [43000, -128], [44000, -126]],
    markers: [["-136.03 dB", 1347, 1033, 1058, 1067], ["-134.74 dB", 1484, 1030, 1056, 1064], ["-134.12 dB", 1565, 1028, 1053, 1062]]
  });
})();
```
